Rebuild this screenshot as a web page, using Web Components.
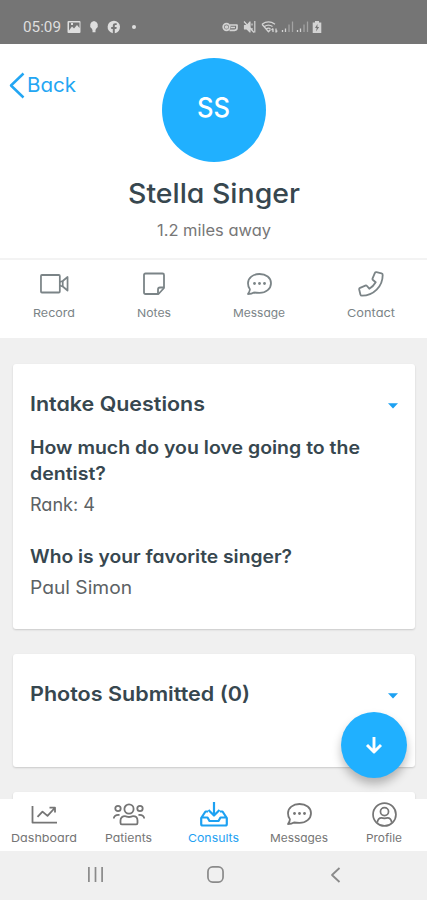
<!DOCTYPE html>
<html lang="en">
<head>
<meta charset="utf-8">
<title>Consult</title>
<style>
html,body{margin:0;height:100%;overflow:hidden;background:#f0f0f0}
body{font-family:Inter,"Open Sans",sans-serif;font-feature-settings:"cv11" 1;color:#37474f}
</style>
</head>
<body>
<consult-app></consult-app>
<script>
const define = (name, html, setup) => customElements.define(name, class extends HTMLElement {
  connectedCallback() {
    if (this.shadowRoot) return;
    const t = document.createElement('template');
    t.innerHTML = html;
    this.attachShadow({mode: 'open'}).append(t.content.cloneNode(true));
    if (setup) setup(this);
  }
});

const ICONS = {
  record: ['0 0 30 24', '<rect x="1" y="3" width="19.500" height="17.500" rx="1"/><path d="M20.500 10l3-1 5-4v13.500l-5-4-3-1"/><path d="M23.500 9v5.500"/>'],
  notes: ['0 0 24 24', '<path d="M3.500 1.500h17q1.500 0 1.500 1.500v13L16.500 22h-13Q2 22 2 20.500V3Q2 1.500 3.500 1.500z"/><path d="M22 15.500h-4q-2 0-2 2V22"/>'],
  chat: ['0 0 26 24', '<path d="M13.500 2C7 2 2 6 2 11.200c0 2.300 .6 4.400 1.900 6 .1 1.800-1 3.400-1.900 4.800 2.800 0 4.300-.4 6-1.500 1.700.3 3.600.4 5.500.4C20 20.900 25 16.600 25 11.200S20 2 13.500 2z"/><g fill="currentColor" stroke="none"><circle cx="8.500" cy="11.500" r="1.400"/><circle cx="13.500" cy="11.500" r="1.400"/><circle cx="18.500" cy="11.500" r="1.400"/></g>'],
  phone: ['0 0 26 26', '<path d="M18.500 1.200l5 1.200q1.200.3 1.200 1.600C24.700 15.500 15.500 24.700 4 24.700q-1.300 0-1.600-1.200l-1.200-5q-.2-1.200.9-1.700l5.200-2.200q1-.4 1.700.4l2.300 2.700a17 17 0 0 0 6.400-6.400L15 9q-.8-.7-.4-1.700l2.200-5.200q.5-1.100 1.700-.9z"/>'],
  chart: ['0 0 26 22', '<path d="M1.500 2v17.500H26M6.500 13.500l5-5.500 5 4.500 7-8M18.500 3.800h5.500v5.200"/>'],
  people: ['0 0 32 24', '<circle cx="16" cy="7" r="4.600"/><circle cx="5" cy="6.500" r="2.700"/><circle cx="27" cy="6.500" r="2.700"/><path d="M7.500 21v-2.500c0-3 2-4.300 4.500-4.300 1.500 0 2 .8 4 .8s2.500-.8 4-.8c2.500 0 4.500 1.300 4.500 4.300V21q0 1.300-1.300 1.300H8.800Q7.500 22.300 7.500 21zM.8 16.500q.5-4 5.700-3.500M31.200 16.500q-.5-4-5.700-3.500"/>'],
  inbox: ['0 0 28 26', '<path d="M14 1v13M8.500 9l5.500 5.500L19.500 9M8 10.500H5.500L1.200 17v6q0 1.500 1.500 1.500h22.600q1.500 0 1.500-1.500v-6l-4.300-6.500H20M1.500 16.500h6l2 3.500h9l2-3.500h6"/>'],
  profile: ['0 0 26 26', '<circle cx="13" cy="13" r="11.900"/><circle cx="13" cy="10" r="4.200"/><path d="M5.500 21.500q.5-5 4.500-5 1 0 3 .6 2-.6 3-.6 4 0 4.500 5"/>'],
  back: ['0 0 16 28', '<path d="M14.500 1.500L2 13.500l12.500 12"/>'],
  caret: ['0 0 10 6', '<path fill="currentColor" stroke="none" d="M0 .3h10L5 5.500z"/>'],
  down: ['0 0 18 18', '<path d="M9 1v14.500M2 9l7 7 7-7"/>'],
  image: ['0 0 14 14', '<path fill="currentColor" stroke="none" fill-rule="evenodd" d="M1.500 1h11q1 0 1 1v10q0 1-1 1h-11q-1 0-1-1V2q0-1 1-1zM2 2.500v8l3-4 2 2 3-3.500 2.500 3V2.500zM4 3h2v2H4z"/>'],
  bulb: ['0 0 10 14', '<path fill="currentColor" stroke="none" d="M5 1a4.300 4.300 0 0 1 2.300 7.600L6.500 10v2.300h-3V10l-.8-1.400A4.300 4.300 0 0 1 5 1z"/>'],
  facebook: ['0 0 14 14', '<path fill="currentColor" stroke="none" d="M7 .7a6.300 6.300 0 0 0-1.200 12.500V9H4.200V7h1.600V5.700C5.800 4 6.800 3.200 8.200 3.200h1.500v1.900h-1c-.7 0-.9.400-.9.900v1h1.900l-.3 2H7.800v4.200A6.300 6.300 0 0 0 7 .7z"/>'],
  dot: ['0 0 4 4', '<circle cx="2" cy="2" r="2" fill="currentColor" stroke="none"/>'],
  vpn: ['0 0 16 12', '<circle cx="4.500" cy="6" r="3.300"/><circle cx="4.500" cy="6" r="1"/><path d="M8 4h7v3q0 2-2.500 2.300H7.500M9 6.500h4"/>'],
  mute: ['0 0 13 14', '<path fill="currentColor" d="M1.500 5.500H4l3-3.500v10L4 9H1.500z"/><path d="M1 1.500l10 11M9 3.500v2M9 8v2M11.800 1v11.500"/>'],
  wifi: ['0 0 17 14', '<path d="M1 4.200q6.500-4.500 13 0M3.500 6.500q4-2.800 8 0M5.500 8.800q2-1.500 4 0M1 4.200l6.500 7.500 2-2.200M12 12V8.500m-1.500 1.500L12 8.500M15 8.500V12l1.300-1.400"/>'],
  signal: ['0 0 13 13', '<path d="M1.500 12v-2M4.500 12V8.500"/><path opacity=".5" d="M8 12V4.500M11.500 12V1.500"/>'],
  battery: ['0 0 10 14', '<path fill="currentColor" stroke="none" fill-rule="evenodd" d="M3 1h4v1.500h2.300V13H.7V2.500H3zM5.500 4L3 8h1.700L4 11.500 7.200 7H5.400z"/>'],
  recents: ['0 0 18 16', '<path d="M2 0v16M9 0v16M16 0v16"/>'],
  home: ['0 0 18 18', '<rect x="1" y="1" width="16" height="16" rx="5"/>'],
  prev: ['0 0 11 16', '<path d="M9.500 1L2 8l7.500 7"/>']
};

define('ui-icon', '<style>:host{display:inline-flex;flex:none}svg{display:block;fill:none;stroke:currentColor;stroke-linejoin:round}</style>', el => {
  const [box, body] = ICONS[el.getAttribute('name')];
  const [, , bw, bh] = box.split(' ');
  el.shadowRoot.innerHTML += `<svg viewBox="${box}" preserveAspectRatio="none" width="${el.getAttribute('w') || bw}" height="${el.getAttribute('h') || bh}" stroke-width="${el.getAttribute('stroke') || 1.8}">${body}</svg>`;
});

/* A line of text whose glyphs are widened, with slight tracking, to fill the given width. */
define('fit-text', '<style>:host{display:block;white-space:nowrap}span{display:inline-block;transform-origin:0 50%}</style><span></span>', el => {
  const s = el.shadowRoot.querySelector('span');
  s.textContent = el.getAttribute('text');
  const w = +el.getAttribute('w');
  el.style.width = w + 'px';
  s.style.transform = `scaleX(${w / s.getBoundingClientRect().width})`;
});

define('status-bar', `<style>
:host{display:flex;align-items:center;box-sizing:border-box;height:43.500px;padding:10px 0 0 23px;background:#757575;color:#dedede;flex:none}
fit-text{font:15.500px/20px Roboto,sans-serif}
.l,.r{display:flex;align-items:center}
.l{width:199px}.r{gap:5px;opacity:.9}
</style>
<div class="l"><fit-text text="05:09" w="38"></fit-text>
<ui-icon name="image" style="margin-left:6px"></ui-icon><ui-icon name="bulb" style="margin-left:8px"></ui-icon><ui-icon name="facebook" style="margin-left:8px"></ui-icon><ui-icon name="dot" style="margin-left:11px"></ui-icon></div>
<div class="r"><ui-icon name="vpn" stroke="1.700"></ui-icon><ui-icon name="mute" stroke="1.200"></ui-icon><ui-icon name="wifi" stroke="1.300"></ui-icon><ui-icon name="signal" stroke="1.300" style="margin-left:-2px"></ui-icon><ui-icon name="signal" stroke="1.300" style="margin-left:-3px"></ui-icon><ui-icon name="battery" style="margin-left:-2px"></ui-icon></div>`);

define('patient-header', `<style>
:host{display:grid;grid-template-columns:1fr auto 1fr;align-content:start;box-sizing:border-box;height:214.500px;padding-top:14.500px;background:#fff;flex:none}
.back{display:flex;align-items:flex-start;gap:2px;padding:14px 0 0 9px;color:#23a6f3}
.back fit-text{font-size:20px;line-height:26px}
.avatar{display:grid;place-items:center;width:104px;height:104px;border-radius:50%;background:#20b0ff;color:#fff;font-size:27px;font-weight:500;line-height:30px}
.avatar fit-text{margin-top:-4px}
.name,.away{grid-column:1/4;justify-self:center}
.name{font-size:27px;line-height:36px;font-weight:500;margin-top:14px;color:#37474f}
.away{font-size:15.500px;line-height:22px;margin-top:8px;color:#777}
</style>
<div class="back"><ui-icon name="back" stroke="2.500"></ui-icon><fit-text text="Back" w="49"></fit-text></div>
<div class="avatar"><fit-text text="SS" w="33"></fit-text></div><span></span>
<fit-text class="name" text="Stella Singer" w="172"></fit-text>
<fit-text class="away" text="1.2 miles away" w="114"></fit-text>`);

define('icon-label', `<style>
:host{display:flex;flex-direction:column;align-items:center}
.i{display:flex;align-items:center;height:26px}
fit-text{font-size:11px;line-height:14px;margin-top:var(--label-gap,8px)}
</style><div class="i"><slot></slot></div>`, el => {
  const t = document.createElement('fit-text');
  t.setAttribute('text', el.getAttribute('text'));
  t.setAttribute('w', el.getAttribute('w'));
  el.shadowRoot.append(t);
});

define('action-row', `<style>
:host{display:flex;justify-content:space-between;align-items:flex-start;box-sizing:border-box;height:80px;padding:11px 32px 0 33px;border-top:2px solid #f3f3f3;background:#fff;color:#7b8487;flex:none}
icon-label{--label-gap:9px}
</style>
<icon-label text="Record" w="42"><ui-icon name="record" w="29" h="24"></ui-icon></icon-label>
<icon-label text="Notes" w="34"><ui-icon name="notes"></ui-icon></icon-label>
<icon-label text="Message" w="52"><ui-icon name="chat"></ui-icon></icon-label>
<icon-label text="Contact" w="48"><ui-icon name="phone"></ui-icon></icon-label>`);

define('info-card', `<style>
:host{display:block;box-sizing:border-box;background:#fff;border-radius:3px;box-shadow:0 1px 2px rgba(0,0,0,.16);padding:26px 17px 0;flex:none}
header{display:flex;justify-content:space-between;align-items:center;height:28px;font-size:20px;font-weight:600;line-height:28px}
ui-icon{color:#1da1f2;margin-top:4px}
</style><header><slot name="title"></slot><ui-icon name="caret"></ui-icon></header><slot></slot>`);

define('qa-item', `<style>
:host{display:block}
.q{font-size:18px;font-weight:600;line-height:26px}
.a{font-size:18px;line-height:26px;margin-top:5px;color:#5c6265}
</style><div class="q"><slot></slot></div><div class="a"><slot name="answer"></slot></div>`);

define('float-button', `<style>
:host{position:absolute;left:341px;top:712px;width:66px;height:66px;border-radius:50%;display:grid;place-items:center;background:#20b0ff;color:#fff;box-shadow:0 6px 10px rgba(0,0,0,.26)}
</style><ui-icon name="down" stroke="2.900"></ui-icon>`);

define('tab-bar', `<style>
:host{display:grid;grid-template-columns:repeat(5,1fr);box-sizing:border-box;height:52px;padding:2px 0 0 1px;background:#fff;color:#757575;flex:none;position:relative}
icon-label{--label-gap:4px}
.on{color:#1da1f2}
</style>
<icon-label text="Dashboard" w="66"><ui-icon name="chart" h="21"></ui-icon></icon-label>
<icon-label text="Patients" w="47"><ui-icon name="people"></ui-icon></icon-label>
<icon-label class="on" text="Consults" w="51"><ui-icon name="inbox" stroke="2.200"></ui-icon></icon-label>
<icon-label text="Messages" w="58"><ui-icon name="chat"></ui-icon></icon-label>
<icon-label text="Profile" w="36"><ui-icon name="profile" w="25" h="25"></ui-icon></icon-label>`);

define('system-nav', `<style>
:host{display:grid;grid-template-columns:repeat(3,120px);justify-content:center;place-items:center;box-sizing:border-box;height:49px;padding:0 0 2px 3px;background:#f0f0f0;color:#8a8a8a;flex:none}
</style><ui-icon name="recents" w="17" h="15"></ui-icon><ui-icon name="home" w="17" h="17"></ui-icon><ui-icon name="prev"></ui-icon>`);

define('consult-app', `<style>
:host{display:flex;flex-direction:column;position:relative;height:900px;width:427px;overflow:hidden}
main{flex:1;min-height:0;overflow:hidden;display:flex;flex-direction:column;gap:25px;padding:26px 12px 0 13px;background:#f0f0f0}
.one{height:265px}.two{height:113px}.three{height:100px}
.first{margin-top:17px}.second{margin-top:26px}
</style>
<status-bar></status-bar>
<patient-header></patient-header>
<action-row></action-row>
<main>
<info-card class="one"><fit-text slot="title" text="Intake Questions" w="175"></fit-text>
<qa-item class="first"><fit-text text="How much do you love going to the" w="330"></fit-text><fit-text text="dentist?" w="76"></fit-text><fit-text slot="answer" text="Rank: 4" w="65"></fit-text></qa-item>
<qa-item class="second"><fit-text text="Who is your favorite singer?" w="262"></fit-text><fit-text slot="answer" text="Paul Simon" w="102"></fit-text></qa-item>
</info-card>
<info-card class="two"><fit-text slot="title" text="Photos Submitted (0)" w="220"></fit-text></info-card>
<info-card class="three"></info-card>
</main>
<float-button></float-button>
<tab-bar></tab-bar>
<system-nav></system-nav>`);
</script>
</body>
</html>
